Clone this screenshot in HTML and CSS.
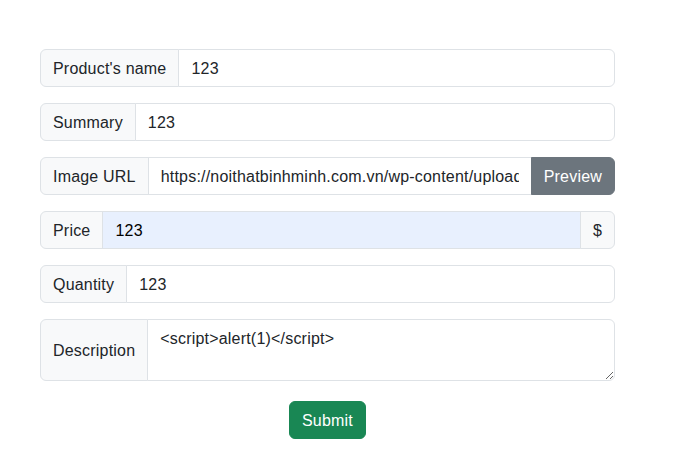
FILE: index.html
```html
<!DOCTYPE html>
<html>
<head>
<meta charset="utf-8">
<link rel="stylesheet" href="styles.css">
</head>
<body>
<form class="form">
  <div class="group">
    <span class="addon">Product's name</span>
    <input class="control" type="text" value="123">
  </div>
  <div class="group">
    <span class="addon">Summary</span>
    <input class="control" type="text" value="123">
  </div>
  <div class="group">
    <span class="addon">Image URL</span>
    <input class="control" type="text" value="https://noithatbinhminh.com.vn/wp-content/uploads/2020/08/sofa.jpg">
    <button type="button" class="btn-preview">Preview</button>
  </div>
  <div class="group">
    <span class="addon">Price</span>
    <input class="control autofill" type="text" value="123">
    <span class="addon addon-end">$</span>
  </div>
  <div class="group">
    <span class="addon">Quantity</span>
    <input class="control" type="text" value="123">
  </div>
  <div class="group">
    <span class="addon">Description</span>
    <textarea class="control area">&lt;script&gt;alert(1)&lt;/script&gt;</textarea>
  </div>
  <div class="actions">
    <button type="button" class="btn-submit">Submit</button>
  </div>
</form>
</body>
</html>
```
FILE: styles.css
```css
html, body {
  margin: 0;
  padding: 0;
  background: #fff;
}
body {
  font-family: "Liberation Sans", Arial, sans-serif;
  font-size: 16px;
  color: #212529;
}
.form {
  width: 575px;
  margin: 49px 0 0 40px;
}
.group {
  display: flex;
  align-items: stretch;
  margin-bottom: 16px;
}
.addon {
  display: flex;
  align-items: center;
  padding: 1px 12px 0 12px;
  background: #f8f9fa;
  border: 1px solid #dee2e6;
  border-radius: 6px 0 0 6px;
  line-height: 24px;
  letter-spacing: 0.2px;
  white-space: nowrap;
  color: #212529;
}
.addon-end {
  border-radius: 0 6px 6px 0;
  margin-left: -1px;
}
.control {
  flex: 1;
  min-width: 0;
  height: 38px;
  box-sizing: border-box;
  margin: 0 0 0 -1px;
  padding: 7px 12px 5px 12px;
  font-family: inherit;
  font-size: 16px;
  line-height: 24px;
  letter-spacing: 0.2px;
  color: #212529;
  background: #fff;
  border: 1px solid #dee2e6;
  border-radius: 0 6px 6px 0;
  outline: none;
}
.autofill {
  background: #e8f0fe;
  color: #000;
  border-radius: 0;
}
.area {
  height: 62px;
  resize: vertical;
  padding: 7px 12px 5px 12px;
}
.btn-preview {
  height: 38px;
  margin-left: -1px;
  padding: 1px 12px 0 12px;
  font-family: inherit;
  font-size: 16px;
  letter-spacing: 0.2px;
  color: #fff;
  background: #6c757d;
  border: 1px solid #6c757d;
  border-radius: 0 6px 6px 0;
}
.group:has(.btn-preview) .control {
  border-radius: 0;
}
.actions {
  display: flex;
  justify-content: center;
  margin-top: 20px;
}
.btn-submit {
  height: 38px;
  padding: 1px 12px 0 12px;
  font-family: inherit;
  font-size: 16px;
  letter-spacing: 0.2px;
  color: #fff;
  background: #198754;
  border: 1px solid #198754;
  border-radius: 6px;
}
```
